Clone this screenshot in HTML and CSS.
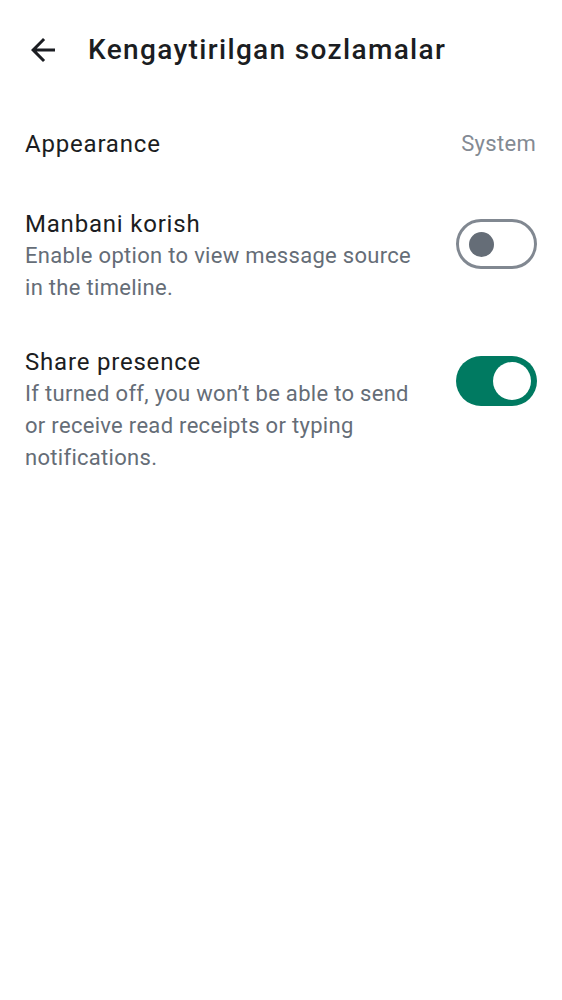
FILE: index.html
```html
<!DOCTYPE html>
<html lang="uz">
<head>
<meta charset="utf-8">
<title>Kengaytirilgan sozlamalar</title>
<link rel="stylesheet" href="styles.css">
</head>
<body>
<header class="topbar">
  <button class="back" aria-label="Back">
    <svg width="24" height="24" viewBox="4 4 16 16" aria-hidden="true"><path d="M20 11H7.83l5.59-5.59L12 4l-8 8 8 8 1.41-1.41L7.83 13H20v-2z" fill="#1b1d22"/></svg>
  </button>
  <h1 class="title">Kengaytirilgan sozlamalar</h1>
</header>
<main class="list">
  <div class="row row-first">
    <div class="text"><div class="label">Appearance</div></div>
    <div class="value">System</div>
  </div>
  <div class="row">
    <div class="text">
      <div class="label">Manbani korish</div>
      <div class="desc">Enable option to view message source in the timeline.</div>
    </div>
    <div class="switch off"><span class="knob"></span></div>
  </div>
  <div class="row">
    <div class="text">
      <div class="label">Share presence</div>
      <div class="desc">If turned off, you won’t be able to send or receive read receipts or typing notifications.</div>
    </div>
    <div class="switch on"><span class="knob"></span></div>
  </div>
</main>
</body>
</html>
```

FILE: styles.css
```css
* { box-sizing: border-box; }
body {
  margin: 0;
  background: #ffffff;
  font-family: Roboto, "Noto Sans", sans-serif;
  color: #1b1d22;
}
.topbar {
  height: 100px;
  display: flex;
  align-items: center;
  padding-left: 31px;
}
.back {
  border: 0;
  background: none;
  padding: 0;
  width: 24px;
  height: 24px;
  display: flex;
}
.title {
  margin: 0 0 0 33px;
  font-size: 28px;
  font-weight: 500;
  line-height: 36px;
  letter-spacing: 1.35px;
}
.list { display: flex; flex-direction: column; }
.row {
  display: flex;
  align-items: flex-start;
  justify-content: space-between;
  padding: 21px 25px;
}
.row-first {
  padding-top: 28px;
  padding-bottom: 27px;
  align-items: center;
}
.text { max-width: 400px; }
.label {
  font-size: 24px;
  line-height: 32px;
  letter-spacing: 0.8px;
  color: #1b1d22;
}
.desc {
  font-size: 22px;
  line-height: 32px;
  letter-spacing: 0.3px;
  color: #656d77;
}
.value {
  font-size: 22px;
  line-height: 32px;
  letter-spacing: 0.3px;
  color: #838a93;
  margin-right: 1px;
}
.switch {
  position: relative;
  flex: none;
  width: 81px;
  height: 50px;
  border-radius: 25px;
  margin-top: 11px;
}
.switch.off {
  border: 3px solid #818891;
  background: #ffffff;
}
.switch.on {
  background: #007a61;
  margin-top: 10px;
}
.knob {
  position: absolute;
  border-radius: 50%;
}
.off .knob {
  width: 25px;
  height: 25px;
  left: 10px;
  top: 9.5px;
  background: #656d77;
}
.on .knob {
  width: 38px;
  height: 38px;
  right: 6px;
  top: 6px;
  background: #ffffff;
}
```
